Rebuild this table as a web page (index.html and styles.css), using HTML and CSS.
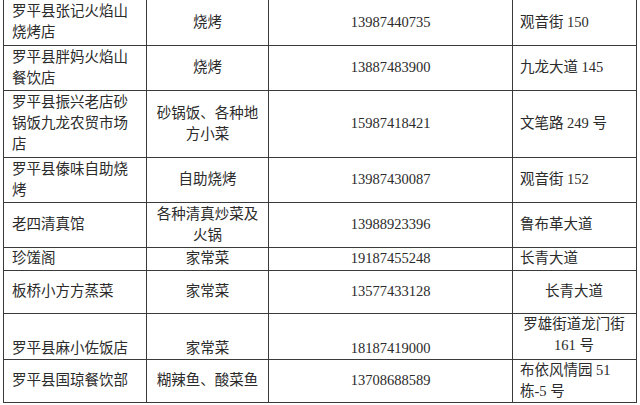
FILE: index.html
```html
<!DOCTYPE html>
<html lang="zh-CN">
<head>
<meta charset="utf-8">
<title>罗平县餐饮店名录</title>
<link rel="stylesheet" href="styles.css">
</head>
<body>
<table class="list">
  <colgroup>
    <col class="c-name">
    <col class="c-type">
    <col class="c-phone">
    <col class="c-addr">
  </colgroup>
  <tbody>
    <tr class="r1">
      <td class="name">罗平县张记火焰山烧烤店</td>
      <td class="type">烧烤</td>
      <td class="phone">13987440735</td>
      <td class="addr">观音街 150</td>
    </tr>
    <tr class="r2">
      <td class="name">罗平县胖妈火焰山餐饮店</td>
      <td class="type">烧烤</td>
      <td class="phone">13887483900</td>
      <td class="addr">九龙大道 145</td>
    </tr>
    <tr class="r3">
      <td class="name">罗平县振兴老店砂锅饭九龙农贸市场店</td>
      <td class="type">砂锅饭、各种地方小菜</td>
      <td class="phone">15987418421</td>
      <td class="addr">文笔路 249 号</td>
    </tr>
    <tr class="r4">
      <td class="name">罗平县傣味自助烧烤</td>
      <td class="type">自助烧烤</td>
      <td class="phone">13987430087</td>
      <td class="addr">观音街 152</td>
    </tr>
    <tr class="r5">
      <td class="name">老四清真馆</td>
      <td class="type">各种清真炒菜及火锅</td>
      <td class="phone">13988923396</td>
      <td class="addr">鲁布革大道</td>
    </tr>
    <tr class="r6">
      <td class="name">珍馐阁</td>
      <td class="type">家常菜</td>
      <td class="phone">19187455248</td>
      <td class="addr">长青大道</td>
    </tr>
    <tr class="r7">
      <td class="name">板桥小方方蒸菜</td>
      <td class="type">家常菜</td>
      <td class="phone">13577433128</td>
      <td class="addr center">长青大道</td>
    </tr>
    <tr class="r8">
      <td class="name">罗平县麻小佐饭店</td>
      <td class="type">家常菜</td>
      <td class="phone">18187419000</td>
      <td class="addr center">罗雄街道龙门街<br>161 号</td>
    </tr>
    <tr class="r9">
      <td class="name">罗平县国琼餐饮部</td>
      <td class="type">糊辣鱼、酸菜鱼</td>
      <td class="phone">13708688589</td>
      <td class="addr">布依风情园 51<br>栋-5 号</td>
    </tr>
  </tbody>
</table>
</body>
</html>
```

FILE: styles.css
```css
html, body {
  margin: 0;
  padding: 0;
  background: #ffffff;
}

body {
  font-family: "Liberation Serif", "Noto Sans CJK SC", serif;
  font-size: 14.5px;
  color: #2b2b2b;
}

.list {
  border-collapse: collapse;
  table-layout: fixed;
  width: 633px;
  margin-left: 3px;
}

.c-name { width: 143px; }
.c-type { width: 122px; }
.c-phone { width: 244px; }
.c-addr { width: 124px; }

.list td {
  border: 1px solid #3a3a3a;
  padding: 0 8px;
  line-height: 21px;
  vertical-align: middle;
  overflow: hidden;
}

.list tr:first-child td {
  border-top: none;
}

.list td.name { text-align: left; }
.list td.type { text-align: center; }
.list td.phone { text-align: center; }
.list td.addr { text-align: left; padding-left: 7px; }
.list td.addr.center { text-align: center; }

.r1 { height: 45px; }
.r2 { height: 45px; }
.r3 { height: 67px; }
.r4 { height: 45px; }
.r5 { height: 45px; }
.r6 { height: 23px; }
.r7 { height: 43px; }
.r8 { height: 46px; }
.r9 { height: 43px; }

.r8 td { vertical-align: bottom; }
.r8 td.addr { vertical-align: top; }
```
